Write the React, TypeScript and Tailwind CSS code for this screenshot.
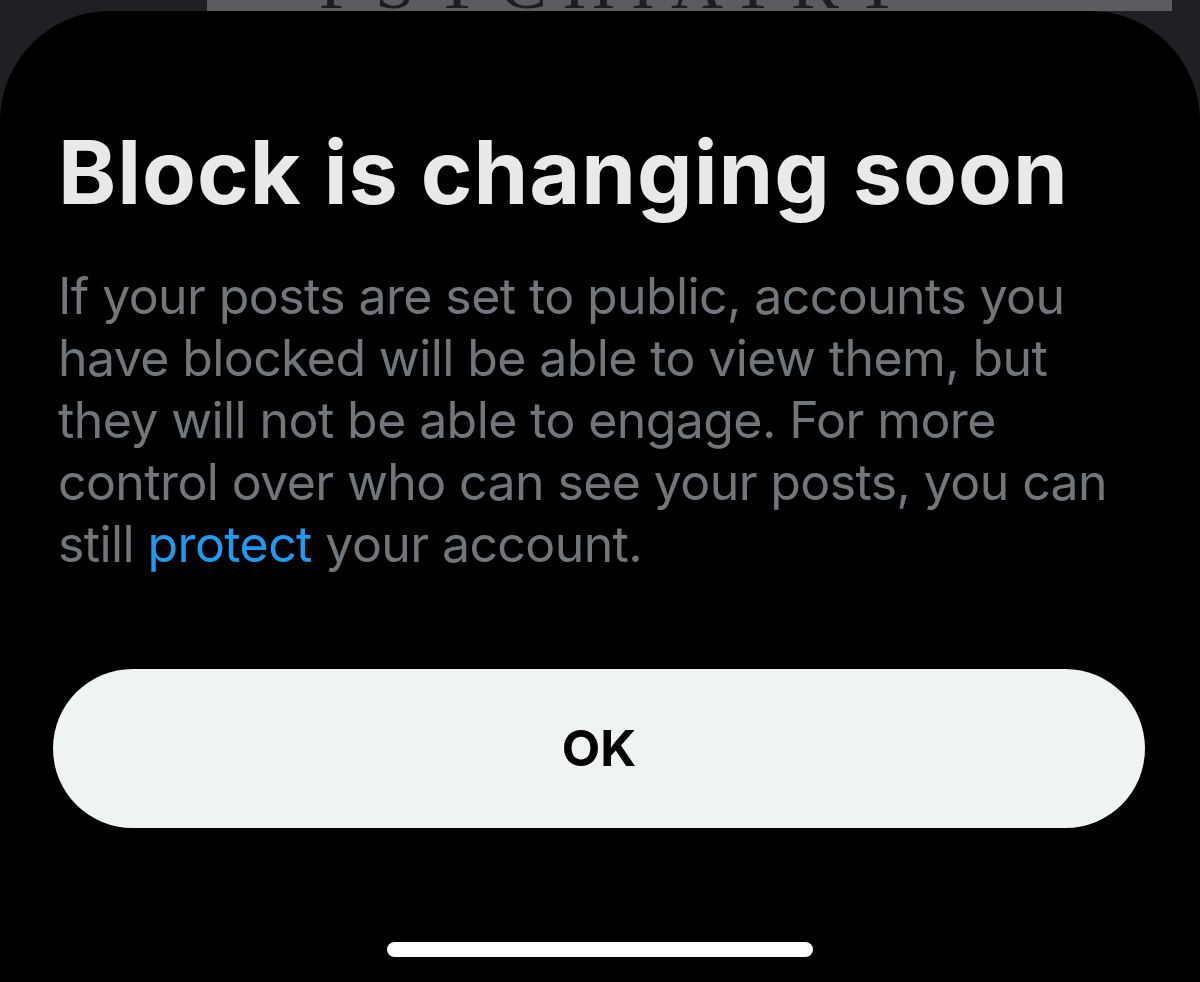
const bodyLines = [
  "If your posts are set to public, accounts you",
  "have blocked will be able to view them, but",
  "they will not be able to engage. For more",
  "control over who can see your posts, you can",
];

export default function App() {
  return (
    <div className="flex h-[982px] w-[1200px] flex-col overflow-hidden bg-[#1f2024] font-['Inter','Noto_Sans',sans-serif]">
      <div className="ml-[207px] h-[11px] w-[965px] shrink-0 overflow-hidden bg-[#5b5c60]">
        <div className="-mt-[52px] pl-[112px] font-['Liberation_Serif',serif] text-[72px] leading-[72px] tracking-[16px] text-[#1d1d1f]">
          PSYCHIATRY
        </div>
      </div>
      <div className="flex flex-1 flex-col rounded-t-[110px] bg-black">
        <h1 className="mt-[117px] pl-[58px] text-[88px] font-bold leading-[88px] tracking-[1px] text-[#e7e9ea]">
          Block is changing soon
        </h1>
        <p className="mt-[49px] pl-[58px] text-[50px] leading-[62px] tracking-[-0.6px] text-[#71767b]">
          {bodyLines.map((line) => (
            <span key={line} className="block whitespace-nowrap">
              {line}
            </span>
          ))}
          <span className="block whitespace-nowrap">
            still <span className="text-[#1d9bf0]">protect</span> your account.
          </span>
        </p>
        <button className="mt-[94px] ml-[53px] flex h-[159px] w-[1092px] items-center justify-center rounded-full bg-[#eff3f4] text-[50px] font-bold text-black">
          OK
        </button>
        <div className="mx-auto mt-[114px] h-[15px] w-[426px] rounded-full bg-white" />
      </div>
    </div>
  );
}
